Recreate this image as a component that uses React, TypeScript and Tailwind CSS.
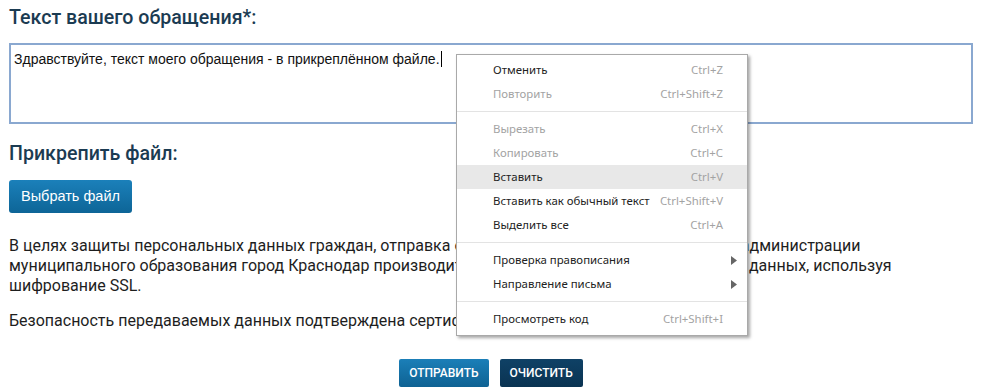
import { useState } from "react";

const menu: ({ label: string; key?: string; off?: boolean; hover?: boolean; sub?: boolean } | "sep")[] = [
  { label: "Отменить", key: "Ctrl+Z" },
  { label: "Повторить", key: "Ctrl+Shift+Z", off: true },
  "sep",
  { label: "Вырезать", key: "Ctrl+X", off: true },
  { label: "Копировать", key: "Ctrl+C", off: true },
  { label: "Вставить", key: "Ctrl+V", hover: true },
  { label: "Вставить как обычный текст", key: "Ctrl+Shift+V" },
  { label: "Выделить все", key: "Ctrl+A" },
  "sep",
  { label: "Проверка правописания", sub: true },
  { label: "Направление письма", sub: true },
  "sep",
  { label: "Просмотреть код", key: "Ctrl+Shift+I" },
];

function ContextMenu() {
  return (
    <div className="absolute left-[456px] top-[54px] w-[292px] bg-white border border-[#a9a9a9] pt-[3px] pb-[4px] shadow-[2px_2px_3px_rgba(0,0,0,0.35)] font-['Noto_Sans',sans-serif] text-[11.4px]">
      {menu.map((m, i) =>
        m === "sep" ? (
          <div key={i} className="h-px bg-[#e3e3e3] my-[5px]" />
        ) : (
          <div
            key={i}
            className={
              "h-6 flex items-center pl-9 pr-6 " +
              (m.hover ? "bg-[#e8e8e8] " : "") +
              (m.off ? "text-[#a3a3a3]" : "text-[#222]")
            }
          >
            <span className="flex-1">{m.label}</span>
            {m.key && <span className="text-[#a3a3a3]">{m.key}</span>}
            {m.sub && (
              <svg width="6" height="9" viewBox="0 0 6 9" className="-mr-[14px]">
                <path d="M0 0 L6 4.5 L0 9 Z" fill="#666" />
              </svg>
            )}
          </div>
        )
      )}
    </div>
  );
}

export default function App() {
  const [text] = useState("Здравствуйте, текст моего обращения - в прикреплённом файле.");
  return (
    <div className="relative w-[983px] h-[388px] bg-white overflow-hidden">
      <div className="pl-[9px] pr-[10px] pt-[5px]">
        <h2 className="font-['Roboto',sans-serif] font-medium text-[19.6px] leading-[26px] text-[#1b3b52]">
          Текст вашего обращения*:
        </h2>
        <div className="mt-[12px] h-[81px] border-2 border-[#8aa8d0] pl-[3px] pt-[4px] font-['Liberation_Sans',sans-serif] text-[14px] text-[#111]">
          {text}
          <span className="inline-block w-px h-[16px] bg-black align-[-3px] ml-px" />
        </div>
        <h2 className="mt-[17px] font-['Roboto',sans-serif] font-medium text-[19.6px] leading-[26px] text-[#1b3b52]">
          Прикрепить файл:
        </h2>
        <button className="mt-[13px] h-[33px] px-[12px] rounded-[3px] bg-gradient-to-b from-[#1b80ba] to-[#0d6597] text-white font-['Liberation_Sans',sans-serif] text-[14.5px]">
          Выбрать файл
        </button>
        <div className="mt-[23px] font-['Roboto',sans-serif] text-[16px] leading-[20px] text-[#1e1e1e]">
          <p>
            В целях защиты персональных данных граждан, отправка обращений в цифровом виде в адрес администрации
            <br />
            муниципального образования город Краснодар производится по защищенному каналу передачи данных, используя
            <br />
            шифрование SSL.
          </p>
          <p className="mt-[15px]">
            Безопасность передаваемых данных подтверждена сертификатом безопасности.
          </p>
        </div>
        <div className="mt-[28px] flex justify-center gap-[11px] font-['Roboto',sans-serif] font-medium text-[12px] text-white">
          <button className="h-[28px] px-[10px] rounded-[2px] bg-gradient-to-b from-[#1b7fb8] to-[#0e6293]">
            ОТПРАВИТЬ
          </button>
          <button className="h-[28px] px-[10px] rounded-[2px] bg-gradient-to-b from-[#0f4166] to-[#0a3352]">
            ОЧИСТИТЬ
          </button>
        </div>
      </div>
      <ContextMenu />
    </div>
  );
}
